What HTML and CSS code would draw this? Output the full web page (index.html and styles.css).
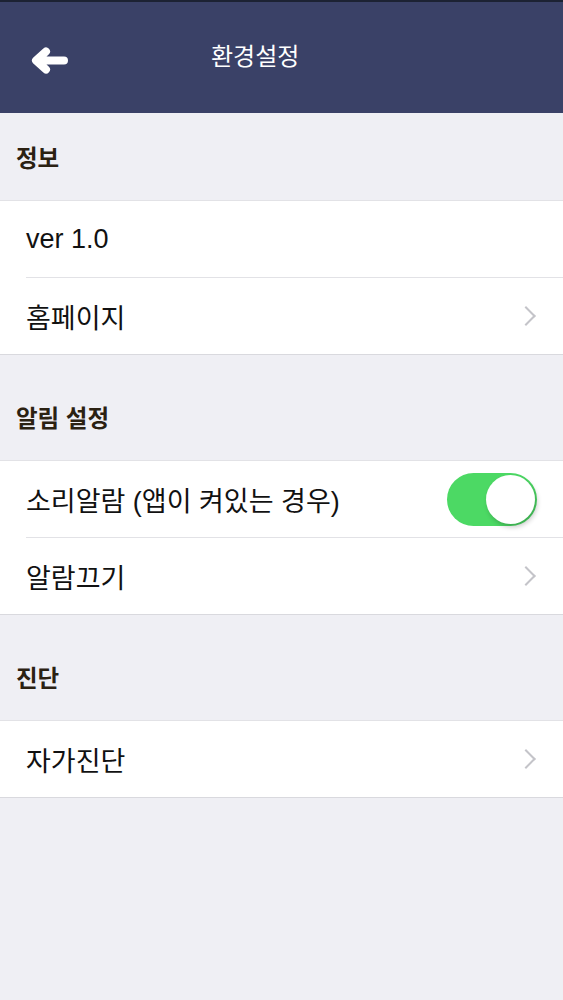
FILE: index.html
```html
<!DOCTYPE html>
<html lang="ko">
<head>
<meta charset="utf-8">
<title>환경설정</title>
<link rel="stylesheet" href="styles.css">
</head>
<body>
<div class="app">
  <header class="navbar">
    <button class="back" aria-label="뒤로">
      <svg width="40" height="30" viewBox="0 0 40 30">
        <path d="M34 13.5 H8 M16 4.5 L6 13.5 L16 22.5" fill="none" stroke="#fff" stroke-width="8" stroke-linecap="round" stroke-linejoin="round"/>
      </svg>
    </button>
    <h1 class="title">환경설정</h1>
  </header>

  <section class="group first">
    <h2 class="group-title">정보</h2>
    <ul class="list">
      <li class="row"><span class="label">ver 1.0</span></li>
      <li class="row"><span class="label">홈페이지</span><span class="chev"></span></li>
    </ul>
  </section>

  <section class="group">
    <h2 class="group-title">알림 설정</h2>
    <ul class="list">
      <li class="row"><span class="label">소리알람 (앱이 켜있는 경우)</span><span class="switch on"><span class="knob"></span></span></li>
      <li class="row"><span class="label">알람끄기</span><span class="chev"></span></li>
    </ul>
  </section>

  <section class="group">
    <h2 class="group-title">진단</h2>
    <ul class="list">
      <li class="row"><span class="label">자가진단</span><span class="chev"></span></li>
    </ul>
  </section>
</div>
</body>
</html>
```

FILE: styles.css
```css
* { box-sizing: border-box; }
html, body { margin: 0; padding: 0; }
body {
  background: #efeff4;
  font-family: "Liberation Sans", "Noto Sans CJK KR", sans-serif;
  -webkit-font-smoothing: antialiased;
}
.app { min-height: 1000px; background: #efeff4; }

.navbar {
  height: 113px;
  background: #3a4167;
  border-top: 2px solid #1c2233;
  display: grid;
  grid-template-columns: 211px auto 1fr;
  align-items: center;
}
.back {
  justify-self: start;
  margin-left: 30px;
  padding: 0;
  border: 0;
  background: none;
  width: 40px;
  height: 30px;
  display: flex;
  margin-top: 8px;
}
.title {
  margin: 0;
  color: #fff;
  font-family: "Noto Sans CJK KR", sans-serif;
  font-weight: 400;
  font-size: 24px;
  line-height: 1;
  margin-top: -5px;
}

.group { padding-top: 18px; }
.group.first { padding-top: 0; }
.group-title {
  margin: 0;
  height: 88px;
  display: flex;
  align-items: center;
  padding: 0 0 0 16px;
  font-family: "Noto Sans CJK KR", sans-serif;
  font-weight: 700;
  font-size: 23.5px;
  color: #2b2112;
  border-bottom: 1px solid #e2e2e6;
}
.list {
  list-style: none;
  margin: 0;
  padding: 0 0 0 26px;
  background: #fff;
  border-bottom: 1px solid #d9d9de;
}
.row {
  height: 77px;
  display: flex;
  align-items: center;
  justify-content: space-between;
  padding-right: 26px;
  border-bottom: 1px solid #e2e2e6;
}
.row:last-child { border-bottom: 0; height: 76px; }
.label {
  font-size: 27px;
  color: #111;
  font-family: "Liberation Sans", "Noto Sans CJK KR", sans-serif;
}
.chev {
  width: 14px;
  height: 14px;
  border-top: 2.5px solid #c4c4c9;
  border-right: 2.5px solid #c4c4c9;
  transform: rotate(45deg);
  margin-right: 4px;
}
.switch {
  width: 90px;
  height: 53px;
  border-radius: 27px;
  background: #4cd964;
  display: flex;
  align-items: center;
  justify-content: flex-end;
  padding: 0 2px;
}
.knob {
  width: 49px;
  height: 49px;
  border-radius: 50%;
  background: #fff;
  box-shadow: 2px 3px 5px rgba(0,0,0,0.22);
}
```
